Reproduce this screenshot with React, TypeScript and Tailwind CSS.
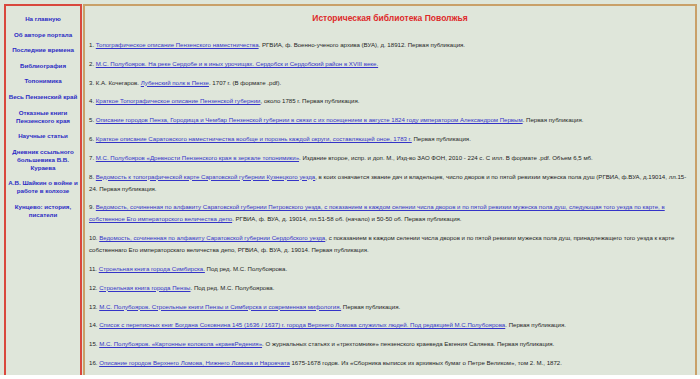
import React from "react";

type Part = string | { link: string };

interface Entry {
  parts: Part[];
}

// lines kept as they wrap on the original page
const navItems: string[][] = [
  ["На главную"],
  ["Об авторе портала"],
  ["Последние времена"],
  ["Библиография"],
  ["Топонимика"],
  ["Весь Пензенский край"],
  ["Отказные книги", "Пензенского края"],
  ["Научные статьи"],
  ["Дневник ссыльного", "большевика В.В.", "Кураева"],
  ["А.В. Шайкин о войне и", "работе в колхозе"],
  ["Кунцево: история,", "писатели"],
];

const entries: Entry[] = [
  { parts: [{ link: "Топографическое описание Пензенского наместничества" }, ". РГВИА, ф. Военно-ученого архива (ВУА), д. 18912. Первая публикация."] },
  { parts: [{ link: "М.С. Полубояров. На реке Сердобе и в иных урочищах. Сердобск и Сердобский район в XVIII веке." }] },
  { parts: ["К.А. Кочегаров. ", { link: "Лубенский полк в Пензе" }, ". 1707 г. (В формате .pdf)."] },
  { parts: [{ link: "Краткое Топографическое описание Пензенской губернии" }, ", около 1785 г. Первая публикация."] },
  { parts: [{ link: "Описание городов Пенза, Городища и Чембар Пензенской губернии в связи с их посещением в августе 1824 году императором Александром Первым" }, ". Первая публикация."] },
  { parts: [{ link: "Краткое описание Саратовского наместничества вообще и порознь каждой округи, составляющей оное, 1783 г." }, " Первая публикация."] },
  { parts: [{ link: "М.С. Полубояров «Древности Пензенского края в зеркале топонимики»" }, ". Издание второе, испр. и доп. М., Изд-во ЗАО ФОН, 2010 - 224 с. С илл. В формате .pdf. Объем 6,5 мб."] },
  { parts: [{ link: " Ведомость к топографической карте Саратовской губернии Кузнецкого уезда" }, ", в коих означается звание дач и владельцев, число дворов и по пятой ревизии мужеска пола душ (РГВИА, ф.ВУА, д.19014, лл.15-24. Первая публикация."] },
  { parts: [{ link: "Ведомость, сочиненная по алфавиту Саратовской губернии Петровского уезда, с показанием в каждом селении числа дворов и по пятой ревизии мужеска пола душ, следующая того уезда по карте, в собственное Его императорского величества депо" }, ". РГВИА, ф. ВУА, д. 19014, лл.51-58 об. (начало) и 50-50 об. Первая публикация."] },
  { parts: [{ link: "Ведомость, сочиненная по алфавиту Саратовской губернии Сердобского уезда" }, ", с показанием в каждом селении числа дворов и по пятой ревизии мужеска пола душ, принадлежащего того уезда к карте собственнаго Его императорскаго величества депо, РГВИА, ф. ВУА, д. 19014. Первая публикация."] },
  { parts: [{ link: "Строельная книга города Симбирска." }, "  Под ред. М.С. Полубоярова."] },
  { parts: [{ link: "Строельная книга города Пензы" }, ". Под ред. М.С. Полубоярова."] },
  { parts: [{ link: "М.С. Полубояров. Строельные книги Пензы и Симбирска и современная мифология." }, " Первая публикация."] },
  { parts: [{ link: "Список с переписных книг Богдана Соковнина 145 (1636 / 1637) г. города Верхнего Ломова служилых людей. Под редакцией М.С.Полубоярова" }, ". Первая публикация."] },
  { parts: [{ link: "М.С. Полубояров. «Картонные колокола «краевРедения»" }, ". О журнальных статьях и «трехтомнике» пензенского краеведа Евгения Саляева. Первая публикация."] },
  { parts: [{ link: "Описание городов Верхнего Ломова, Нижнего Ломова и Наровчата" }, " 1675-1678 годов. Из «Сборника выписок из архивных бумаг о Петре Великом», том 2. М., 1872."] },
];

const App: React.FC = () => {
  return (
    <div className="w-[700px] h-[379px] bg-white font-['Liberation_Sans',Arial,sans-serif]">
      <div className="flex gap-[1px] h-[375px] overflow-hidden bg-[#dfe6da] pl-[4px] pr-[3px] pt-[4px]">

        <aside className="w-[78px] shrink-0 border-2 border-b-0 border-[#d9483d] pt-[9px]">
          <nav className="flex flex-col gap-[7.6px] -mx-[2px]">
            {navItems.map((lines) => (
              <a
                key={lines.join(" ")}
                href="#"
                className="flex flex-col items-center text-center whitespace-nowrap text-[6.2px] leading-[8px] font-bold text-[#2b2bc4]"
              >
                {lines.map((line) => (
                  <span key={line}>{line}</span>
                ))}
              </a>
            ))}
          </nav>
        </aside>

        <main className="flex-1 border-2 border-b-0 border-[#c9a068] pl-[4px] pr-[4px] pt-[6px]">
          <h1 className="text-center text-[8.5px] leading-[12px] font-bold text-[#de2a2a]">
            Историческая библиотека Поволжья
          </h1>

          <div className="flex flex-col gap-[6.8px] mt-[15px] text-[6.1px] leading-[12px] text-[#1e1e1e]">
            {entries.map((entry, i) => (
              <p key={i}>
                {i + 1}.{" "}
                {entry.parts.map((part, j) =>
                  typeof part === "string" ? (
                    <span key={j}>{part}</span>
                  ) : (
                    <a key={j} href="#" className="text-[#3434c8] underline">
                      {part.link}
                    </a>
                  )
                )}
              </p>
            ))}
          </div>
        </main>
      </div>
    </div>
  );
};

export default App;
